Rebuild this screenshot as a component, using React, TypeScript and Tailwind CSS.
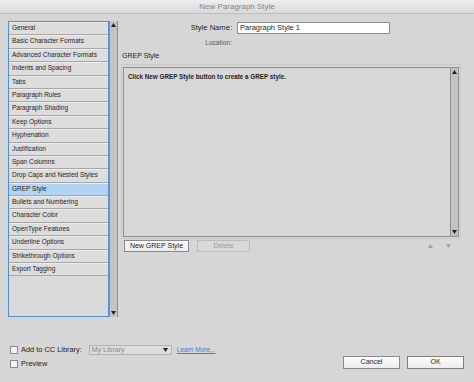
import React from "react";

const SECTIONS = [
  "General",
  "Basic Character Formats",
  "Advanced Character Formats",
  "Indents and Spacing",
  "Tabs",
  "Paragraph Rules",
  "Paragraph Shading",
  "Keep Options",
  "Hyphenation",
  "Justification",
  "Span Columns",
  "Drop Caps and Nested Styles",
  "GREP Style",
  "Bullets and Numbering",
  "Character Color",
  "OpenType Features",
  "Underline Options",
  "Strikethrough Options",
  "Export Tagging",
];

function Tri({ down = false, color = "#222" }: { down?: boolean; color?: string }) {
  return (
    <svg width="5" height="4" viewBox="0 0 5 4">
      <path d={down ? "M0 0 H5 L2.5 4 Z" : "M0 4 H5 L2.5 0 Z"} fill={color} />
    </svg>
  );
}

function Scrollbar({ className }: { className: string }) {
  return (
    <div className={`flex flex-col items-center justify-between bg-[#c3c3c3] py-[2px] ${className}`}>
      <Tri />
      <Tri down />
    </div>
  );
}

function Checkbox() {
  return <div className="h-[8px] w-[8px] border border-[#8a8a8a] bg-[#f2f2f2]" />;
}

export default function App() {
  const selected = "GREP Style";
  return (
    <div className="flex h-[382px] w-[474px] flex-col bg-[#d6d6d6] font-['Liberation_Sans',Arial,sans-serif] text-[#1e1e1e]">
      <div className="h-[14px] border-b border-[#bdbdbd] bg-gradient-to-b from-[#eeeeee] to-[#d9d9d9] text-center text-[8px] leading-[14px] text-[#858585]">
        New Paragraph Style
      </div>

      <div className="flex h-[316px] pl-[8px] pt-[7px]">
        {/* section list */}
        <div className="flex h-[296px]">
          <div className="flex w-[101px] flex-col border border-[#4d90d6] bg-[#dadada]">
            {SECTIONS.map((s) => (
              <div
                key={s}
                className={`h-[13.4px] shrink-0 border-b border-[#a7a7a7] pl-[3px] text-[6.5px] leading-[12.4px] shadow-[inset_0_1px_0_#ececec] ${
                  s === selected ? "bg-[#b3d3f3]" : "bg-[#dddddd]"
                }`}
              >
                {s}
              </div>
            ))}
          </div>
          <Scrollbar className="w-[9px] border-x border-[#8e8e8e]" />
        </div>

        {/* right side */}
        <div className="ml-[3px] flex w-[340px] flex-col">
          <div className="mt-[1px] flex h-[12px] items-center">
            <div className="w-[111px] text-right text-[7.6px]">Style Name:</div>
            <div className="ml-[5px] h-[12px] w-[153px] border border-[#8d8d8d] bg-white pl-[2px] text-[7.5px] leading-[10px]">
              Paragraph Style 1
            </div>
          </div>
          <div className="mt-[3px] flex h-[12px] items-center">
            <div className="w-[111px] text-right text-[6.6px] text-[#5a5a5a]">Location:</div>
          </div>
          <div className="mt-[2px] h-[10px] pl-[1px] text-[7px] leading-[10px]">GREP Style</div>
          <div className="mt-[3px] h-[175px] border border-[#c9c9c9] px-[1px] pb-[1px] pt-[2px]">
            <div className="flex h-full border border-[#8f8f8f] bg-[#d7d7d7]">
              <div className="flex-1 pl-[4px] pt-[4px] text-[6.3px] font-bold">
                Click New GREP Style button to create a GREP style.
              </div>
              <Scrollbar className="w-[8px] border-l border-[#8e8e8e]" />
            </div>
          </div>
          <div className="mt-[1px] flex h-[12px] items-center">
            <div className="ml-[3px] flex h-[12px] w-[65px] items-center justify-center border border-[#8a8a8a] bg-gradient-to-b from-[#fbfbfb] to-[#ececec] text-[7px]">
              New GREP Style
            </div>
            <div className="ml-[8px] flex h-[12px] w-[53px] items-center justify-center border border-[#bcbcbc] bg-[#d9d9d9] text-[7px] text-[#9a9a9a]">
              Delete
            </div>
            <div className="ml-auto mr-[10px] flex items-center gap-[13px]">
              <Tri color="#a3a3a3" />
              <Tri down color="#a3a3a3" />
            </div>
          </div>
        </div>
      </div>

      {/* bottom */}
      <div className="flex flex-1 items-end justify-between pb-[13px] pl-[10px] pr-[10px]">
        <div className="flex flex-col gap-[5px] pb-[1px]">
          <div className="flex h-[10px] items-center">
            <Checkbox />
            <span className="ml-[3px] text-[7.4px]">Add to CC Library:</span>
            <div className="ml-[7px] flex h-[10px] w-[83px] items-center justify-between border border-[#b3b3b3] bg-[#dddddd] pl-[2px] pr-[3px] text-[7px] text-[#8a8a8a]">
              My Library
              <Tri down />
            </div>
            <span className="ml-[5px] text-[6.5px] text-[#3b7fd4] underline">Learn More...</span>
          </div>
          <div className="flex h-[8px] items-center">
            <Checkbox />
            <span className="ml-[3px] text-[7.4px]">Preview</span>
          </div>
        </div>
        <div className="flex gap-[7px]">
          <div className="flex h-[13px] w-[57px] items-center justify-center border border-[#8a8a8a] bg-gradient-to-b from-[#fdfdfd] to-[#ececec] text-[7px]">
            Cancel
          </div>
          <div className="flex h-[13px] w-[57px] items-center justify-center border border-[#7e7e7e] bg-gradient-to-b from-[#fdfdfd] to-[#ececec] text-[7px]">
            OK
          </div>
        </div>
      </div>
    </div>
  );
}
